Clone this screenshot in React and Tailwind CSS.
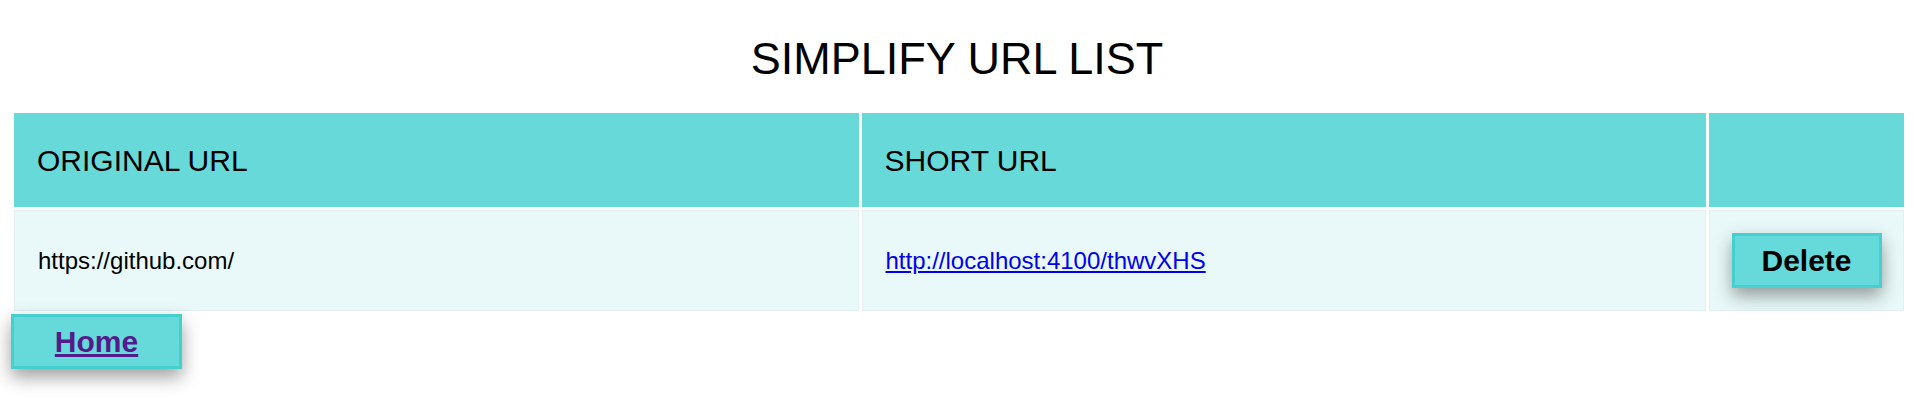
// App.jsx
import React from "react"

const urls = [
  { id: 1, original: "https://github.com/", short: "http://localhost:4100/thwvXHS" },
]

const App = () => {
  return (
    <div className="min-h-[403px] bg-white text-black font-['Liberation_Sans',Arial,sans-serif]">
      <h1 className="pt-[33px] mb-[26px] text-center text-[45px] leading-[51px] font-normal">
        SIMPLIFY URL LIST
      </h1>

      <table className="ml-[11px] w-[1896px] table-fixed border-separate border-spacing-[3px]">
        <thead>
          <tr>
            <th className="h-[94px] bg-[#66d9d8] pl-[23px] text-left text-[30px] font-normal">ORIGINAL URL</th>
            <th className="h-[94px] bg-[#66d9d8] pl-[23px] text-left text-[30px] font-normal">SHORT URL</th>
            <th className="h-[94px] w-[195px] bg-[#66d9d8]"></th>
          </tr>
        </thead>
        <tbody>
          {urls.map((url) => (
            <tr key={url.id}>
              <td className="h-[101px] border border-[#e4efef] bg-[#e9f9f9] pl-[23px] text-[24px]">
                {url.original}
              </td>
              <td className="h-[101px] border border-[#e4efef] bg-[#e9f9f9] pl-[23px] text-[24px]">
                <a href="#" className="text-[#0000ee] underline">
                  {url.short}
                </a>
              </td>
              <td className="h-[101px] border border-[#e4efef] bg-[#e9f9f9] text-center">
                <button className="w-[150px] h-[55px] border-[3px] border-[#44d0cf] bg-[#66dada] text-[30px] font-bold shadow-[0_8px_18px_rgba(0,0,0,0.38)]">
                  Delete
                </button>
              </td>
            </tr>
          ))}
        </tbody>
      </table>

      <button className="ml-[11px] flex items-center justify-center w-[171px] h-[55px] border-[3px] border-[#44d0cf] bg-[#66dada] shadow-[0_8px_18px_rgba(0,0,0,0.38)]">
        <a href="#" className="text-[30px] font-bold text-[#551a8b] underline">
          Home
        </a>
      </button>
    </div>
  )
}

export default App
